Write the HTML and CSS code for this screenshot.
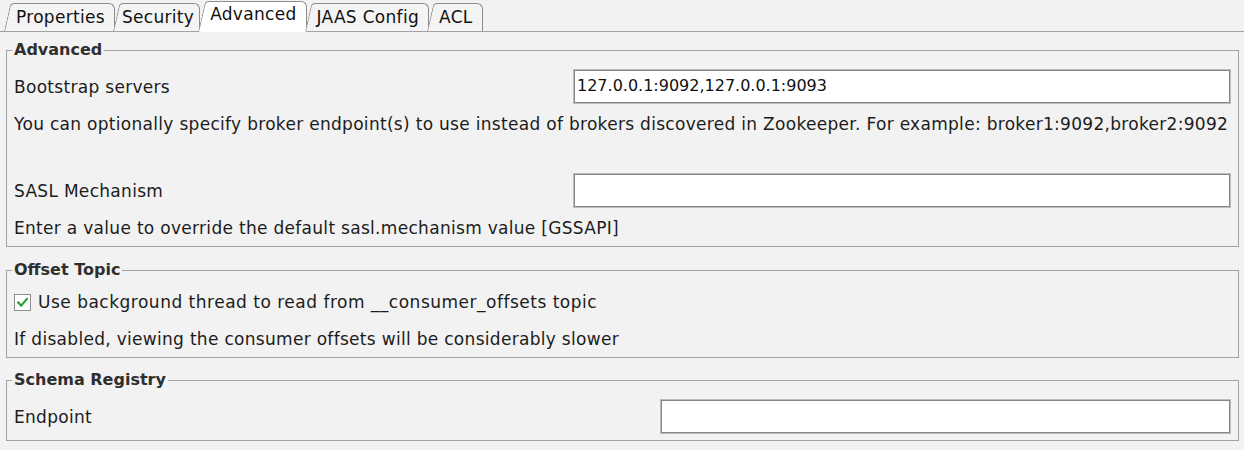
FILE: index.html
```html
<!DOCTYPE html>
<html>
<head>
<meta charset="utf-8">
<link rel="stylesheet" href="styles.css">
</head>
<body>
<div class="tabs">
  <div class="tab">Properties</div>
  <div class="tab tab--tight">Security</div>
  <div class="tab tab--active">Advanced</div>
  <div class="tab">JAAS Config</div>
  <div class="tab">ACL</div>
</div>
<div class="panel">
  <fieldset class="group group--advanced">
    <legend class="group__title">Advanced</legend>
    <div class="field field--first">
      <span class="field__label">Bootstrap servers</span>
      <div class="input input--wide">127.0.0.1:9092,127.0.0.1:9093</div>
    </div>
    <p class="help">You can optionally specify broker endpoint(s) to use instead of brokers discovered in Zookeeper. For example: broker1:9092,broker2:9092</p>
    <div class="field field--spaced">
      <span class="field__label">SASL Mechanism</span>
      <div class="input input--wide"></div>
    </div>
    <p class="help">Enter a value to override the default sasl.mechanism value [GSSAPI]</p>
  </fieldset>

  <fieldset class="group group--offset">
    <legend class="group__title">Offset Topic</legend>
    <div class="check">
      <span class="check__box">
        <svg width="15" height="15" viewBox="0 0 15 15"><path d="M3.2 7.6 L6.2 10.6 L11.8 4" fill="none" stroke="#2f9e2f" stroke-width="2.2" stroke-linecap="square"/></svg>
      </span>
      <span class="check__label">Use background thread to read from __consumer_offsets topic</span>
    </div>
    <p class="help help--after-check">If disabled, viewing the consumer offsets will be considerably slower</p>
  </fieldset>

  <fieldset class="group group--schema">
    <legend class="group__title">Schema Registry</legend>
    <div class="field field--first">
      <span class="field__label">Endpoint</span>
      <div class="input input--narrow"></div>
    </div>
  </fieldset>
</div>
</body>
</html>
```

FILE: styles.css
```css
html, body {
  margin: 0;
  padding: 0;
}
body {
  width: 1244px;
  height: 450px;
  overflow: hidden;
  background: #f2f2f2;
  font-family: "DejaVu Sans", "Noto Sans", sans-serif;
  font-size: 17px;
  letter-spacing: 0.3px;
  color: #1c1c1c;
}

/* ---------- tabs ---------- */
.tabs {
  display: flex;
  align-items: flex-end;
  height: 31px;
  padding-left: 4px;
  border-bottom: 1px solid #a3a3a3;
  box-sizing: content-box;
}
.tab {
  position: relative;
  isolation: isolate;
  height: 28px;
  line-height: 28px;
  padding: 0 10px 0 12px;
  margin-right: -2px;
  color: #111;
  white-space: nowrap;
}
.tab--tight {
  padding: 0 6px 0 9px;
}
.tab::before,
.tab::after {
  content: "";
  position: absolute;
  top: 0;
  bottom: 0;
  z-index: -1;
  background: #f4f4f4;
  border-top: 1px solid #8d8d8d;
}
.tab::before {
  left: 0;
  width: 22px;
  border-left: 1px solid #8d8d8d;
  border-top-left-radius: 4px;
  transform-origin: bottom left;
  transform: skewX(-13deg);
}
.tab::after {
  left: 12px;
  right: 0;
  border-right: 1px solid #8d8d8d;
  border-top-right-radius: 6px;
}
.tab--active {
  height: 31px;
  line-height: 27px;
  margin-bottom: -1px;
}
.tab--active::before,
.tab--active::after {
  background: #ffffff;
}

/* ---------- panel / groups ---------- */
.panel {
  padding: 0 5px 0 6px;
}
.group {
  margin: 0;
  min-width: 0;
  border: 1px solid #a2a2a2;
  padding: 0 7px 8px 7px;
}
.group--advanced {
  margin-top: 8px;
}
.group--offset {
  margin-top: 13px;
  padding-bottom: 8px;
}
.group--schema {
  margin-top: 12px;
  padding-bottom: 6px;
}
.group__title {
  margin-left: -2px;
  padding: 0 2px;
  font-size: 16px;
  font-weight: bold;
  letter-spacing: 0;
  line-height: 20px;
  color: #2f2f2f;
}

.field {
  display: flex;
  align-items: center;
  justify-content: space-between;
}
.field--first {
  margin-top: 9px;
}
.field--spaced {
  margin-top: 39px;
}
.field__label {
  color: #1c1c1c;
}
.input {
  box-sizing: border-box;
  height: 35px;
  line-height: 31px;
  padding: 0 3px;
  background: #ffffff;
  border: 1px solid #bcbcbc;
  box-shadow: inset 0 0 0 1px #868686;
  color: #111;
  font-size: 16px;
  letter-spacing: 0;
  white-space: nowrap;
  overflow: hidden;
}
.input--wide {
  width: 658px;
}
.input--narrow {
  width: 571px;
}

.help {
  margin: 10px 0 0;
  line-height: 20px;
  white-space: nowrap;
}
.help--after-check {
  margin-top: 17px;
}

.check {
  display: flex;
  align-items: center;
  gap: 7px;
  margin-top: 12px;
  height: 20px;
}
.check__label {
  letter-spacing: 0.5px;
}
.check__box {
  box-sizing: border-box;
  width: 17px;
  height: 17px;
  border: 1px solid #8e8e8e;
  background: #ffffff;
  display: flex;
  align-items: center;
  justify-content: center;
}
.check__box svg {
  display: block;
}
```
